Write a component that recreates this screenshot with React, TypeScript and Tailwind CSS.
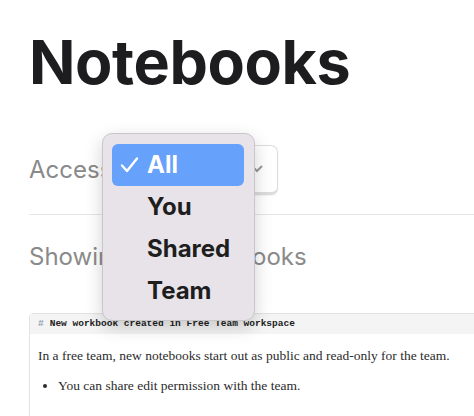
import React from "react";

const items = ["All", "You", "Shared", "Team"];

const App = () => {
  return (
    <div className="relative h-[416px] w-[474px] overflow-hidden bg-white font-['Inter',sans-serif]">
      <div className="pl-[29px] pt-[31px]">
        {/* Title */}
        <h1 className="text-[61px] leading-[62px] font-bold text-[#1d1d1f] tracking-[-0.4px]">
          Notebooks
        </h1>

        {/* Access filter */}
        <div className="mt-[52px] flex items-center gap-[8px]">
          <span className="text-[24px] leading-none text-[#8a8a8a]">Access</span>
          <div className="flex h-[50px] w-[158px] items-center justify-between rounded-[7px] border border-[#dcdcdc] border-b-[3px] bg-white px-3 shadow-[0_1px_2px_rgba(0,0,0,0.06)]">
            <span className="text-[20px] text-[#333]">All</span>
            <svg width="12" height="8" viewBox="0 0 12 8" className="mr-[2px]">
              <path d="M1.5 1.5 L6 6 L10.5 1.5" fill="none" stroke="#999" strokeWidth="2" strokeLinecap="round" />
            </svg>
          </div>
        </div>

        <div className="mt-[19px] h-px bg-[#e6e6e6]" />

        {/* Count */}
        <p className="mt-[30px] text-[24px] leading-none text-[#8a8a8a]">Showing all 9 notebooks</p>

        {/* Notebook preview card */}
        <div className="mt-[44px] w-[470px] rounded-tl-[4px] border border-[#e2e2e2]">
          <div className="flex h-[20px] items-center bg-[#f4f4f4] pl-[8px] font-['Liberation_Mono',monospace] text-[9.5px] font-bold text-[#222]">
            <span className="text-[#8a9bb0]">#</span>
            <span className="ml-[6px]">New workbook created in Free Team workspace</span>
          </div>
          <div className="px-[8px] pt-[12px] pb-10 font-['Liberation_Serif',serif] text-[13.5px] text-[#2b2b2b]">
            <p>In a free team, new notebooks start out as public and read-only for the team.</p>
            <ul className="mt-[10px] list-disc pl-[20px]">
              <li>You can share edit permission with the team.</li>
            </ul>
          </div>
        </div>
      </div>

      {/* Open select menu */}
      <div className="absolute left-[102px] top-[133px] w-[153px] rounded-[10px] border border-[#c9c6ca] bg-[#e7e3e8] pl-[9px] pr-[10px] pt-[10px] pb-[8px] shadow-[0_6px_18px_rgba(0,0,0,0.18)]">
        {items.map((item, i) => (
          <div
            key={item}
            className={
              i === 0
                ? "flex h-[42px] items-center rounded-[6px] bg-[#66a1fb] text-white"
                : "flex h-[42px] items-center text-[#1e1e1e]"
            }
          >
            <span className="flex w-[35px] justify-center">
              {i === 0 && (
                <svg width="19" height="18" viewBox="0 0 19 18">
                  <path d="M2 9.5 L7 15 L17 2.5" fill="none" stroke="white" strokeWidth="2.4" strokeLinecap="round" strokeLinejoin="round" />
                </svg>
              )}
            </span>
            <span className="text-[24px] font-bold leading-none">{item}</span>
          </div>
        ))}
      </div>
    </div>
  );
};

export default App;
